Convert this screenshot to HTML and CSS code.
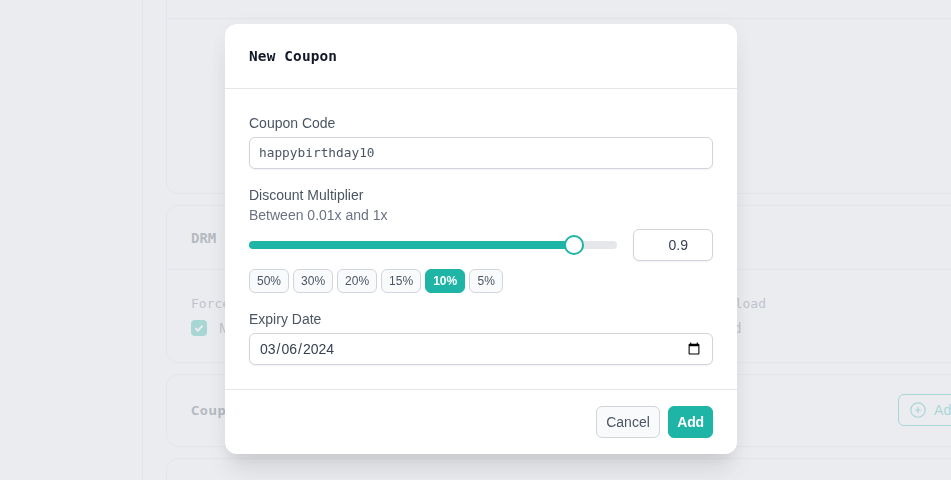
FILE: index.html
```html
<!DOCTYPE html>
<html lang="en">
<head>
  <meta charset="UTF-8">
  <meta name="viewport" content="width=device-width, initial-scale=1.0">
  <title>New Coupon</title>
  <link rel="stylesheet" href="styles.css">
</head>
<body>

  <div class="page">
    <aside class="sidebar"></aside>

    <main class="content">
      <section class="card card-first">
        <div class="card-head card-head-short"></div>
      </section>

      <section class="card">
        <div class="card-head">
          <h2 class="card-title">DRM</h2>
        </div>
        <div class="drm-body">
          <div class="drm-col">
            <div class="drm-label">Force DRM</div>
            <div class="drm-check">
              <span class="checkbox">
                <svg width="10" height="10" viewBox="0 0 10 10"><path d="M1.5 5.2 4 7.6 8.5 2.6" fill="none" stroke="#fff" stroke-width="2"/></svg>
              </span>
              <span class="drm-text">Mandatory</span>
            </div>
          </div>
          <div class="drm-col drm-col-right">
            <div class="drm-label">Force Download</div>
            <div class="drm-check">
              <span class="checkbox"></span>
              <span class="drm-text">Required</span>
            </div>
          </div>
        </div>
      </section>

      <section class="card card-row">
        <h2 class="card-title card-title-sans">Coupons</h2>
        <button class="add-ghost">
          <svg width="16" height="16" viewBox="0 0 16 16"><circle cx="8" cy="8" r="7.2" fill="none" stroke="currentColor" stroke-width="1.2"/><path d="M8 5v6M5 8h6" stroke="currentColor" stroke-width="1.2"/></svg>
          Add
        </button>
      </section>

      <section class="card card-last"></section>
    </main>
  </div>

  <div class="overlay">
    <div class="modal">
      <div class="modal-head">
        <h3 class="modal-title">New Coupon</h3>
      </div>

      <div class="modal-body">
        <div class="field">
          <label class="label">Coupon Code</label>
          <input class="input input-mono" type="text" value="happybirthday10">
        </div>

        <div class="field">
          <label class="label">Discount Multiplier</label>
          <div class="hint">Between 0.01x and 1x</div>
          <div class="slider-row">
            <input class="slider" type="range" min="0" max="1" step="any" value="0.905">
            <input class="input input-number" type="text" value="0.9">
          </div>
          <div class="presets">
            <button class="preset">50%</button>
            <button class="preset">30%</button>
            <button class="preset">20%</button>
            <button class="preset">15%</button>
            <button class="preset preset-active">10%</button>
            <button class="preset">5%</button>
          </div>
        </div>

        <div class="field">
          <label class="label">Expiry Date</label>
          <input class="input input-date" type="date" value="2024-03-06">
        </div>
      </div>

      <div class="modal-foot">
        <button class="btn btn-cancel">Cancel</button>
        <button class="btn btn-add">Add</button>
      </div>
    </div>
  </div>

</body>
</html>
```

FILE: styles.css
```css
* {
  margin: 0;
  padding: 0;
  box-sizing: border-box;
}

html, body {
  height: 100%;
  overflow: hidden;
}

body {
  background-color: #fff;
  font-family: "Liberation Sans", Arial, sans-serif;
  color: #4b5563;
}

/* page behind the dialog */
.page {
  display: flex;
  height: 480px;
  overflow: hidden;
}

.sidebar {
  width: 143px;
  flex-shrink: 0;
  border-right: 1px solid #e5e7eb;
}

.content {
  flex: 1;
  min-width: 0;
  margin-top: -100px;
  padding-left: 23px;
  display: flex;
  flex-direction: column;
  gap: 11px;
}

.card {
  width: 830px;
  flex-shrink: 0;
  border: 1px solid #e5e7eb;
  border-radius: 12px;
}

.card-first {
  height: 294px;
}

.card-head {
  height: 64px;
  padding: 0 24px;
  display: flex;
  align-items: center;
  border-bottom: 1px solid #e5e7eb;
}

.card-head-short {
  height: 118px;
}

.card-title {
  font-family: "DejaVu Sans Mono", monospace;
  font-size: 14px;
  font-weight: 700;
  color: #4b5563;
}

.card-title-sans {
  font-family: "Noto Sans", sans-serif;
  font-size: 13px;
  letter-spacing: 0.5px;
}

.drm-body {
  height: 92px;
  padding: 26px 24px 0;
  display: flex;
  justify-content: space-between;
}

.drm-col-right {
  margin-right: 205px;
}

.drm-label {
  font-family: "DejaVu Sans Mono", monospace;
  font-size: 13px;
  color: #6b7280;
}

.drm-check {
  display: flex;
  align-items: center;
  gap: 12px;
  margin-top: 9px;
  height: 16px;
}

.drm-text {
  font-family: "Liberation Sans", sans-serif;
  font-size: 14px;
  color: #6b7280;
}

.checkbox {
  width: 16px;
  height: 16px;
  border-radius: 4px;
  background-color: #1eb4a6;
  display: flex;
  align-items: center;
  justify-content: center;
}

.card-row {
  height: 73px;
  padding: 0 24px 1px;
  display: flex;
  align-items: center;
  justify-content: space-between;
}

.card-last {
  height: 60px;
}

.add-ghost {
  display: flex;
  align-items: center;
  gap: 8px;
  height: 32px;
  padding: 0 11px;
  border: 1px solid #1eb4a6;
  border-radius: 6px;
  background: none;
  color: #1eb4a6;
  font-family: "Liberation Sans", sans-serif;
  font-size: 14px;
}

/* dialog */
.overlay {
  position: fixed;
  top: 0;
  left: 0;
  width: 100%;
  height: 100%;
  background-color: rgba(226, 228, 234, 0.7);
}

.modal {
  width: 512px;
  margin: 24px 0 0 225px;
  background-color: #fff;
  border-radius: 12px;
  box-shadow: 0 20px 25px -5px rgba(0, 0, 0, 0.1), 0 10px 10px -5px rgba(0, 0, 0, 0.04), 0 0 20px rgba(0, 0, 0, 0.03);
}

.modal-head {
  height: 65px;
  padding: 0 24px;
  display: flex;
  align-items: center;
  border-bottom: 1px solid #e5e7eb;
}

.modal-title {
  font-family: "DejaVu Sans Mono", monospace;
  font-size: 14.4px;
  letter-spacing: 0.15px;
  font-weight: 700;
  color: #111827;
}

.modal-body {
  padding: 24px;
  display: flex;
  flex-direction: column;
  gap: 16px;
}

.label {
  display: block;
  font-size: 14px;
  line-height: 20px;
  color: #4b5563;
}

.hint {
  font-size: 14px;
  line-height: 20px;
  color: #6b7280;
}

.input {
  display: block;
  width: 100%;
  height: 32px;
  margin-top: 4px;
  padding: 0 9px;
  background-color: #fff;
  border: 1px solid #d1d5db;
  border-radius: 6px;
  box-shadow: 0 1px 2px rgba(0, 0, 0, 0.05);
  font-family: "Liberation Sans", Arial, sans-serif;
  font-size: 14px;
  color: #374151;
  outline: none;
}

.input-mono {
  padding-bottom: 2px;
  font-family: "DejaVu Sans Mono", monospace;
  font-size: 12.8px;
  color: #4b5563;
}

.slider-row {
  display: flex;
  align-items: center;
  gap: 16px;
  margin-top: 4px;
}

.slider {
  flex: 1;
  min-width: 0;
  height: 20px;
  -webkit-appearance: none;
  appearance: none;
  background: none;
  outline: none;
}

.slider::-webkit-slider-runnable-track {
  height: 8px;
  border-radius: 4px;
  background: linear-gradient(to right, #1eb4a6 88%, #e5e7eb 88%);
}

.slider::-webkit-slider-thumb {
  -webkit-appearance: none;
  width: 20px;
  height: 20px;
  margin-top: -6px;
  border: 2px solid #1eb4a6;
  border-radius: 50%;
  background-color: #fff;
}

.input-number {
  width: 80px;
  flex-shrink: 0;
  margin-top: 0;
  text-align: right;
  padding-right: 24px;
}

.presets {
  display: flex;
  gap: 4px;
  margin-top: 8px;
}

.preset {
  height: 24px;
  padding: 0 7px;
  min-width: 34px;
  background-color: #f9fafb;
  border: 1px solid #d1d5db;
  border-radius: 6px;
  font-family: "Liberation Sans", Arial, sans-serif;
  font-size: 12px;
  color: #4b5563;
}

.preset-active {
  background-color: #1eb4a6;
  border-color: #1eb4a6;
  color: #fff;
  font-weight: 700;
}

.modal-foot {
  height: 65px;
  padding: 16px 24px 0;
  display: flex;
  justify-content: flex-end;
  gap: 8px;
  border-top: 1px solid #e5e7eb;
}

.btn {
  height: 32px;
  padding: 0;
  border-radius: 6px;
  font-family: "Liberation Sans", Arial, sans-serif;
  font-size: 14px;
}

.btn-cancel {
  width: 64px;
  background-color: #f9fafb;
  border: 1px solid #d1d5db;
  color: #4b5563;
}

.btn-add {
  width: 45px;
  background-color: #1eb4a6;
  border: 1px solid #1eb4a6;
  color: #fff;
  font-weight: 700;
  letter-spacing: -0.3px;
}
```
